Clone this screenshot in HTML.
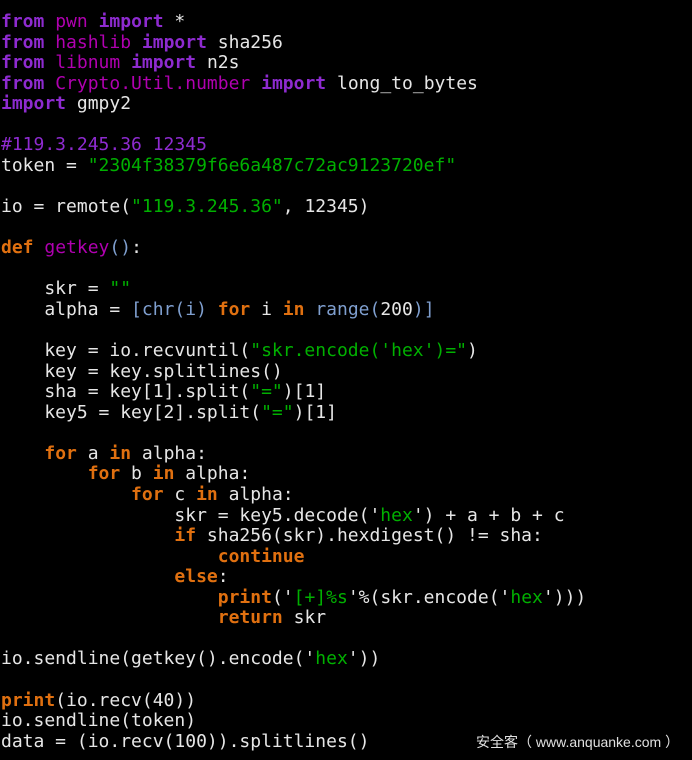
<!DOCTYPE html>
<html><head><meta charset="utf-8"><style>
body{margin:0;background:#000;width:692px;height:760px;overflow:hidden;position:relative}
pre{margin:0;position:absolute;left:1px;top:12px;font-family:"DejaVu Sans Mono","Liberation Mono",monospace;font-size:18px;line-height:20.57px;color:#e6e6e6}
.k{color:#8e2bd0;font-weight:bold}.m{color:#b000b0}.s{color:#00b000}.o{color:#e07010;font-weight:bold}.b{color:#7f9fcf}.c{color:#8e2bd0}
.wm{position:absolute;left:476px;top:732px;font-family:"Liberation Sans","Noto Sans CJK SC",sans-serif;font-size:14px;color:#e0e0e0;white-space:pre}
</style></head><body>
<pre><span class="k">from</span> <span class="m">pwn</span> <span class="k">import</span> *
<span class="k">from</span> <span class="m">hashlib</span> <span class="k">import</span> sha256
<span class="k">from</span> <span class="m">libnum</span> <span class="k">import</span> n2s
<span class="k">from</span> <span class="m">Crypto.Util.number</span> <span class="k">import</span> long_to_bytes
<span class="k">import</span> gmpy2

<span class="c">#119.3.245.36 12345</span>
token = <span class="s">"2304f38379f6e6a487c72ac9123720ef"</span>

io = remote(<span class="s">"119.3.245.36"</span>, 12345)

<span class="o">def</span> <span class="m">getkey</span><span class="b">()</span>:

    skr = <span class="s">""</span>
    alpha = <span class="b">[chr(i)</span> <span class="o">for</span> i <span class="o">in</span> <span class="b">range(</span>200<span class="b">)]</span>

    key = io.recvuntil(<span class="s">"skr.encode('hex')="</span>)
    key = key.splitlines()
    sha = key[1].split(<span class="s">"="</span>)[1]
    key5 = key[2].split(<span class="s">"="</span>)[1]

    <span class="o">for</span> a <span class="o">in</span> alpha:
        <span class="o">for</span> b <span class="o">in</span> alpha:
            <span class="o">for</span> c <span class="o">in</span> alpha:
                skr = key5.decode('<span class="s">hex</span>') + a + b + c
                <span class="o">if</span> sha256(skr).hexdigest() != sha:
                    <span class="o">continue</span>
                <span class="o">else</span>:
                    <span class="o">print</span>('<span class="s">[+]%s</span>'%(skr.encode('<span class="s">hex</span>')))
                    <span class="o">return</span> skr

io.sendline(getkey().encode('<span class="s">hex</span>'))

<span class="o">print</span>(io.recv(40))
io.sendline(token)
data = (io.recv(100)).splitlines()</pre>
<div class="wm">安全客（ www.anquanke.com ）</div>
</body></html>
